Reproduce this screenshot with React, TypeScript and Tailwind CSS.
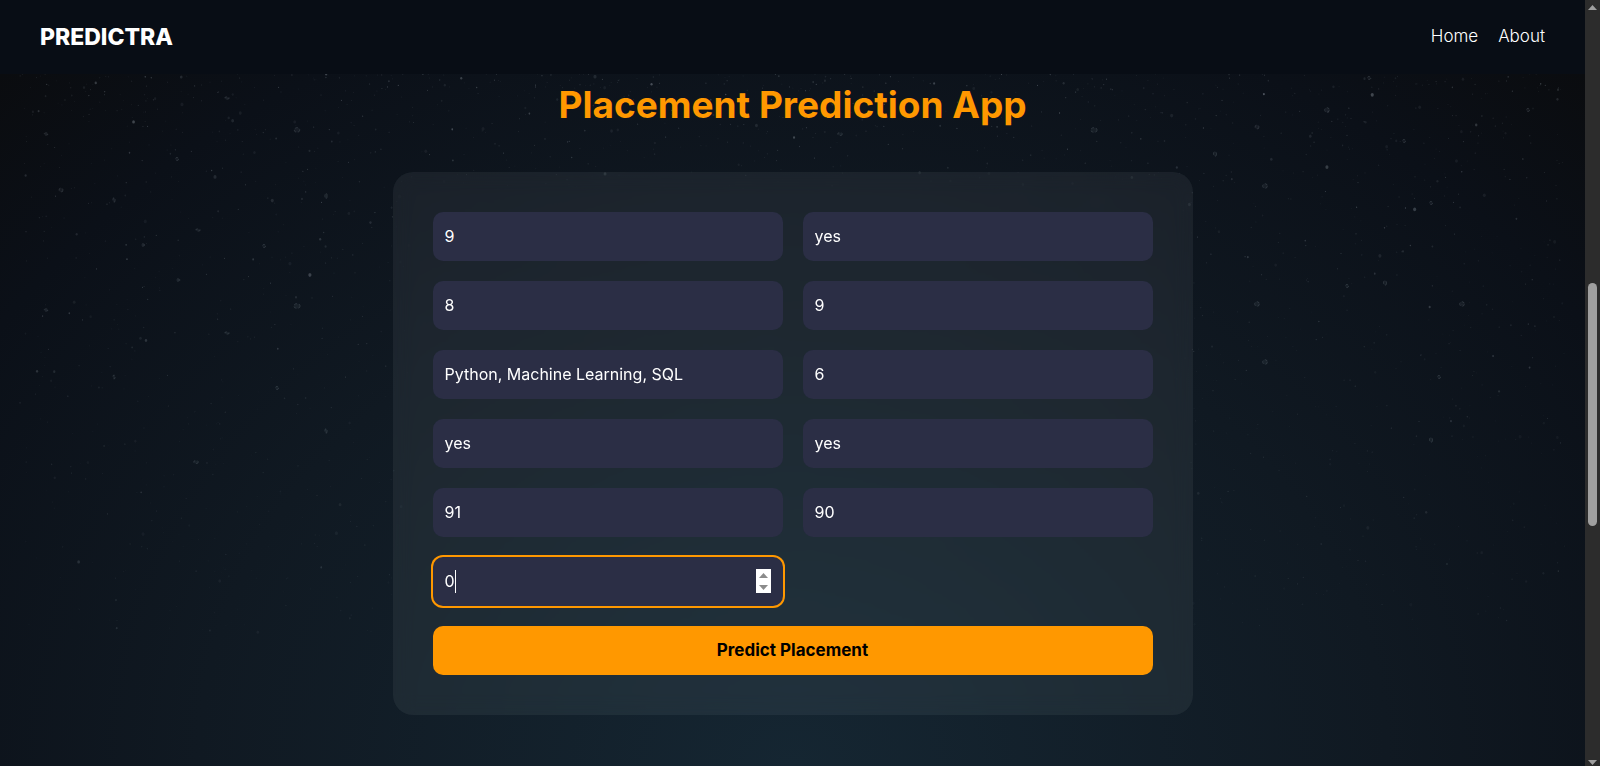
import React from "react";

type Field = { name: string; label: string; value: string };

const fields: Field[] = [
  { name: "cgpa", label: "CGPA", value: "9" },
  { name: "internship", label: "Internship", value: "yes" },
  { name: "projects", label: "Projects", value: "8" },
  { name: "aptitude", label: "Aptitude rating", value: "9" },
  { name: "skills", label: "Skills", value: "Python, Machine Learning, SQL" },
  { name: "softSkills", label: "Soft skills rating", value: "6" },
  { name: "extra", label: "Extracurricular activities", value: "yes" },
  { name: "training", label: "Placement training", value: "yes" },
  { name: "ssc", label: "SSC marks", value: "91" },
  { name: "hsc", label: "HSC marks", value: "90" },
];

const inputClass =
  "h-[49px] w-full rounded-[10px] bg-[#2b2e45] px-3 pb-0.5 font-['Inter',sans-serif] text-[16px] text-white outline-none";

function makeDust(count: number) {
  let seed = 4271;
  const next = () => {
    seed = (seed * 16807) % 2147483647;
    return seed / 2147483647;
  };
  return Array.from({ length: count }, () => {
    const x = 20 + next() * 1545;
    const depth = Math.pow(next(), 1.5);
    const y = 74 + depth * 560;
    const r = 0.5 + Math.pow(next(), 10) * 1.1;
    const o = (0.08 + Math.pow(next(), 3) * 0.3) * (1 - depth * 0.6);
    return { x, y, r, o };
  });
}

const dust = makeDust(2600);

// Larger flakes: [x, y, rx, ry]
const flakes = [
  [227, 98, 3, 1.5], [297, 130, 3.5, 3], [46, 134, 2.5, 1.5], [177, 159, 2, 2], [61, 190, 2.5, 2.5],
  [326, 196, 1.5, 3.5], [114, 200, 1.5, 3], [198, 230, 3, 1.5], [264, 246, 2, 2], [143, 245, 2, 1.5],
  [178, 280, 2, 1.5], [297, 306, 4, 3], [46, 310, 2.5, 1.5], [227, 333, 3, 1.5], [114, 377, 1.5, 2.5],
  [277, 388, 2, 2], [326, 431, 1.5, 3], [196, 462, 3, 2], [1369, 78, 2, 2], [1327, 110, 3, 3],
  [1257, 127, 2.5, 2.5], [1404, 141, 2, 2], [1528, 110, 2, 2], [1265, 186, 3, 3], [1431, 203, 2, 2],
  [1215, 154, 2, 3], [1347, 286, 2, 2], [1385, 283, 2, 3], [1257, 304, 3, 3], [1462, 304, 3, 3],
  [1265, 362, 3, 3], [1439, 377, 2, 2], [1431, 440, 2, 3], [1094, 130, 4, 3], [840, 134, 3, 2],
];

function Dust() {
  return (
    <svg
      aria-hidden="true"
      className="pointer-events-none absolute inset-0 h-full w-full"
      viewBox="0 0 1585 766"
      preserveAspectRatio="xMidYMin slice"
    >
      {dust.map((d, i) => (
        <ellipse key={i} cx={d.x} cy={d.y} rx={d.r} ry={d.r * 1.2} fill="#aab4bd" opacity={d.o} />
      ))}
      {flakes.map(([x, y, rx, ry], i) => (
        <ellipse
          key={i}
          cx={x}
          cy={y}
          rx={rx * 0.8}
          ry={ry * 0.8}
          fill="#aab4bd"
          fillOpacity={0.08}
          stroke="#aab4bd"
          strokeOpacity={0.16}
          strokeDasharray="3 2"
        />
      ))}
    </svg>
  );
}

function Arrow({ up }: { up?: boolean }) {
  return (
    <svg aria-hidden="true" className="block h-[5px] w-[9px]" viewBox="0 0 9 5">
      <path d={up ? "M0 5L4.5 0L9 5Z" : "M0 0L4.5 5L9 0Z"} fill="currentColor" />
    </svg>
  );
}

export default function App() {
  return (
    <div className="flex h-screen overflow-hidden bg-[#090d14] font-['Inter',sans-serif] text-white">
      <div className="relative isolate flex min-w-0 flex-1 flex-col bg-[radial-gradient(ellipse_75%_130%_at_50%_100%,#152632_0%,#101922_50%,#0b1018_80%,#0a0b0d_100%)]">
        <Dust />
        <header className="relative flex h-[74px] shrink-0 items-center justify-between bg-[#080d15] px-10">
          <a href="#top" className="text-[23px] font-extrabold">
            PREDICTRA
          </a>
          <nav className="flex gap-5 text-[17px] font-light">
            <a href="#home">Home</a>
            <a href="#about">About</a>
          </nav>
        </header>
        <main className="relative flex flex-col items-center px-5">
          <h1 className="mt-1 text-[37px] leading-[54px] font-bold text-[#ff9800]">Placement Prediction App</h1>
          <form
            className="mt-10 grid w-full max-w-[800px] grid-cols-2 gap-5 rounded-[20px] bg-[#f0fff8]/6 p-10 backdrop-blur-[10px]"
            onSubmit={(e) => e.preventDefault()}
          >
            {fields.map((f) => (
              <input
                key={f.name}
                name={f.name}
                aria-label={f.label}
                type="text"
                defaultValue={f.value}
                className={inputClass}
              />
            ))}
            <div className="relative">
              <input
                name="backlogs"
                aria-label="Backlogs"
                type="number"
                defaultValue="0"
                className="h-[49px] w-full appearance-none rounded-[10px] bg-[#2b2e45] px-3 pb-0.5 font-['Inter',sans-serif] text-[16px] text-white caret-transparent ring-2 ring-[#ff9800] outline-none [-moz-appearance:textfield] [&::-webkit-inner-spin-button]:appearance-none"
              />
              <span aria-hidden="true" className="absolute top-[13px] left-[22px] h-[23px] w-px bg-white" />
              <div className="absolute top-[12px] right-3 flex h-6 w-[15px] flex-col bg-white text-[#8b8b8b]">
                <button type="button" aria-label="Increase" className="flex flex-1 items-center justify-center">
                  <Arrow up />
                </button>
                <button type="button" aria-label="Decrease" className="flex flex-1 items-center justify-center">
                  <Arrow />
                </button>
              </div>
            </div>
            <button
              type="submit"
              className="col-span-2 h-[49px] rounded-[10px] bg-[#ff9800] text-[17px] font-bold text-black"
            >
              Predict Placement
            </button>
          </form>
        </main>
      </div>
      <div
        aria-hidden="true"
        className="flex w-[15px] shrink-0 flex-col items-center justify-between bg-[#2c2c2c] pt-[5px] pb-px text-[#9f9f9f]"
      >
        <Arrow up />
        <div className="flex w-[9px] flex-1 flex-col py-[5px]">
          <div className="flex-[268]" />
          <div className="flex-[243] rounded-full bg-[#9f9f9f]" />
          <div className="flex-[229]" />
        </div>
        <Arrow />
      </div>
    </div>
  );
}
